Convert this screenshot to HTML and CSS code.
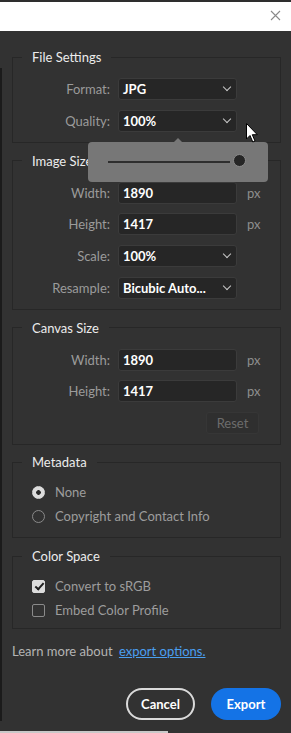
FILE: index.html
```html
<!DOCTYPE html>
<html lang="en">
<head>
  <meta charset="UTF-8">
  <meta name="viewport" content="width=device-width, initial-scale=1.0">
  <title>Export As</title>
  <link rel="stylesheet" href="styles.css">
</head>
<body>
  <div class="titlebar">
    <svg class="close" width="11" height="11" viewBox="0 0 11 11">
      <path d="M1 1 L10 10 M10 1 L1 10" stroke="#8a8a8a" stroke-width="1.1" fill="none"/>
    </svg>
  </div>

  <div class="panel">
    <fieldset class="group">
      <legend>File Settings</legend>
      <div class="row">
        <label>Format:</label>
        <div class="field select">JPG <span class="chev"></span></div>
      </div>
      <div class="row">
        <label>Quality:</label>
        <div class="field select">100% <span class="chev"></span></div>
      </div>
    </fieldset>

    <fieldset class="group">
      <legend>Image Size</legend>
      <div class="row">
        <label>Width:</label>
        <div class="field">1890</div>
        <span class="unit">px</span>
      </div>
      <div class="row">
        <label>Height:</label>
        <div class="field">1417</div>
        <span class="unit">px</span>
      </div>
      <div class="row">
        <label>Scale:</label>
        <div class="field select">100% <span class="chev"></span></div>
      </div>
      <div class="row">
        <label>Resample:</label>
        <div class="field select">Bicubic Auto... <span class="chev"></span></div>
      </div>
    </fieldset>

    <fieldset class="group canvas">
      <legend>Canvas Size</legend>
      <div class="row">
        <label>Width:</label>
        <div class="field">1890</div>
        <span class="unit">px</span>
      </div>
      <div class="row">
        <label>Height:</label>
        <div class="field">1417</div>
        <span class="unit">px</span>
      </div>
      <div class="row">
        <button class="reset" disabled>Reset</button>
      </div>
    </fieldset>

    <fieldset class="group options">
      <legend>Metadata</legend>
      <div class="option"><span class="radio on"></span>None</div>
      <div class="option"><span class="radio"></span>Copyright and Contact Info</div>
    </fieldset>

    <fieldset class="group options color">
      <legend>Color Space</legend>
      <div class="option"><span class="check on"></span>Convert to sRGB</div>
      <div class="option"><span class="check"></span>Embed Color Profile</div>
    </fieldset>

    <p class="learn">Learn more about <a href="#">export options.</a></p>

    <div class="actions">
      <button class="btn cancel">Cancel</button>
      <button class="btn export">Export</button>
    </div>
  </div>

  <!-- quality slider popup -->
  <div class="popover">
    <div class="track"></div>
    <div class="knob"></div>
  </div>

  <svg class="cursor" width="13" height="21" viewBox="0 0 13 21">
    <path d="M0.5 0.5 L0.5 16 L4 12.5 L6.8 19 L9 18 L6.3 11.7 L11.3 11.7 Z" fill="#fff" stroke="#000" stroke-width="1"/>
  </svg>
</body>
</html>
```

FILE: styles.css
```css
body {
    margin: 0;
    width: 291px;
    height: 733px;
    background-color: #323232;
    font-family: Lato, "Noto Sans", sans-serif;
    font-size: 13px;
    position: relative;
    overflow: hidden;
}

/* dark edge on the left and the light strip at the bottom */
body::before {
    content: "";
    position: absolute;
    left: 0;
    top: 68px;
    width: 2px;
    height: 653px;
    background-color: #1b1b1b;
}

body::after {
    content: "";
    position: absolute;
    left: 0;
    bottom: 0;
    width: 168px;
    height: 2px;
    background-color: #c9c9c9;
}

.titlebar {
    height: 29px;
    border-top: 2px solid #2e2e2e;
    background-color: #fff;
    display: flex;
    justify-content: flex-end;
    align-items: center;
    padding-right: 10px;
}

.close {
    margin-bottom: 2px;
}

.panel {
    padding: 18px 10px 0 12px;
}

.group {
    margin: 0 0 10px 0;
    padding: 13px 0 10px 0;
    border: 1px solid #272727;
    min-width: 0;
}

.group.canvas {
    margin-bottom: 9px;
}

.group legend {
    margin-left: 9px;
    padding: 0 10px;
    color: #ececec;
    line-height: 16px;
}

.row {
    display: grid;
    grid-template-columns: 97px 119px auto;
    column-gap: 8px;
    align-items: center;
    height: 22px;
    margin-bottom: 9.7px;
}

.row:last-child {
    margin-bottom: 0;
}

.row label {
    text-align: right;
    color: #9b9b9b;
}

.field {
    height: 20px;
    line-height: 20px;
    border: 1px solid #3b3b3b;
    border-radius: 3px;
    background-color: #262626;
    color: #fff;
    font-weight: bold;
    padding-left: 4px;
    position: relative;
    white-space: nowrap;
}

.chev {
    position: absolute;
    right: 6px;
    top: 5px;
    width: 5px;
    height: 5px;
    border-right: 1.6px solid #c8c8c8;
    border-bottom: 1.6px solid #c8c8c8;
    transform: rotate(45deg);
}

.unit {
    color: #8e8e8e;
    padding-left: 2px;
}

.reset {
    grid-column: 2 / 4;
    justify-self: end;
    margin-right: 21px;
    width: 53px;
    height: 22px;
    border: 1px solid #363636;
    border-radius: 3px;
    background-color: #2f2f2f;
    color: #6c6c6c;
    font-family: inherit;
    font-size: 13px;
    padding: 0;
}

.options {
    padding-bottom: 12px;
}

.options.color {
    padding-bottom: 9px;
}

.option {
    display: flex;
    align-items: center;
    height: 18px;
    margin: 0 0 6px 19px;
    color: #9d9d9d;
}

.option:last-child {
    margin-bottom: 0;
}

.radio {
    width: 11px;
    height: 11px;
    border: 1.5px solid #8a8a8a;
    border-radius: 50%;
    margin-right: 10px;
    box-sizing: content-box;
}

.radio.on {
    border-color: #dcdcdc;
    background: radial-gradient(circle, #2a2a2a 0 2px, #dcdcdc 2.6px);
}

.check {
    width: 11px;
    height: 11px;
    border: 1.5px solid #8a8a8a;
    border-radius: 2px;
    margin-right: 10px;
    position: relative;
}

.check.on {
    border-color: #dcdcdc;
    background-color: #dcdcdc;
}

.check.on::after {
    content: "";
    position: absolute;
    left: 3.5px;
    top: 0.5px;
    width: 3px;
    height: 7px;
    border-right: 2px solid #1e1e1e;
    border-bottom: 2px solid #1e1e1e;
    transform: rotate(42deg);
}

.learn {
    margin: 14px 0 0 0;
    line-height: 16px;
    color: #b4b4b4;
}

.learn a {
    color: #4a9ff0;
    margin-left: 3px;
}

.actions {
    display: flex;
    justify-content: flex-end;
    gap: 16px;
    margin-top: 29px;
}

.btn {
    height: 32px;
    border-radius: 16px;
    font-family: inherit;
    font-size: 13px;
    font-weight: bold;
    color: #fff;
}

.cancel {
    width: 69px;
    background-color: transparent;
    border: 2px solid #dadada;
}

.export {
    width: 70px;
    background-color: #1473e6;
    border: none;
}

.popover {
    position: absolute;
    left: 88px;
    top: 142px;
    width: 180px;
    height: 40px;
    background-color: #777;
    border-radius: 4px;
}

.popover::before {
    content: "";
    position: absolute;
    left: 86px;
    top: -4px;
    border-left: 4px solid transparent;
    border-right: 4px solid transparent;
    border-bottom: 4px solid #777;
}

.track {
    position: absolute;
    left: 20px;
    top: 19px;
    width: 122px;
    height: 2px;
    background-color: #2e2e2e;
}

.knob {
    position: absolute;
    left: 145px;
    top: 12px;
    width: 11px;
    height: 11px;
    border-radius: 50%;
    background-color: #262626;
    border: 1.5px solid #8c8c8c;
}

.cursor {
    position: absolute;
    left: 246px;
    top: 123px;
}
```
